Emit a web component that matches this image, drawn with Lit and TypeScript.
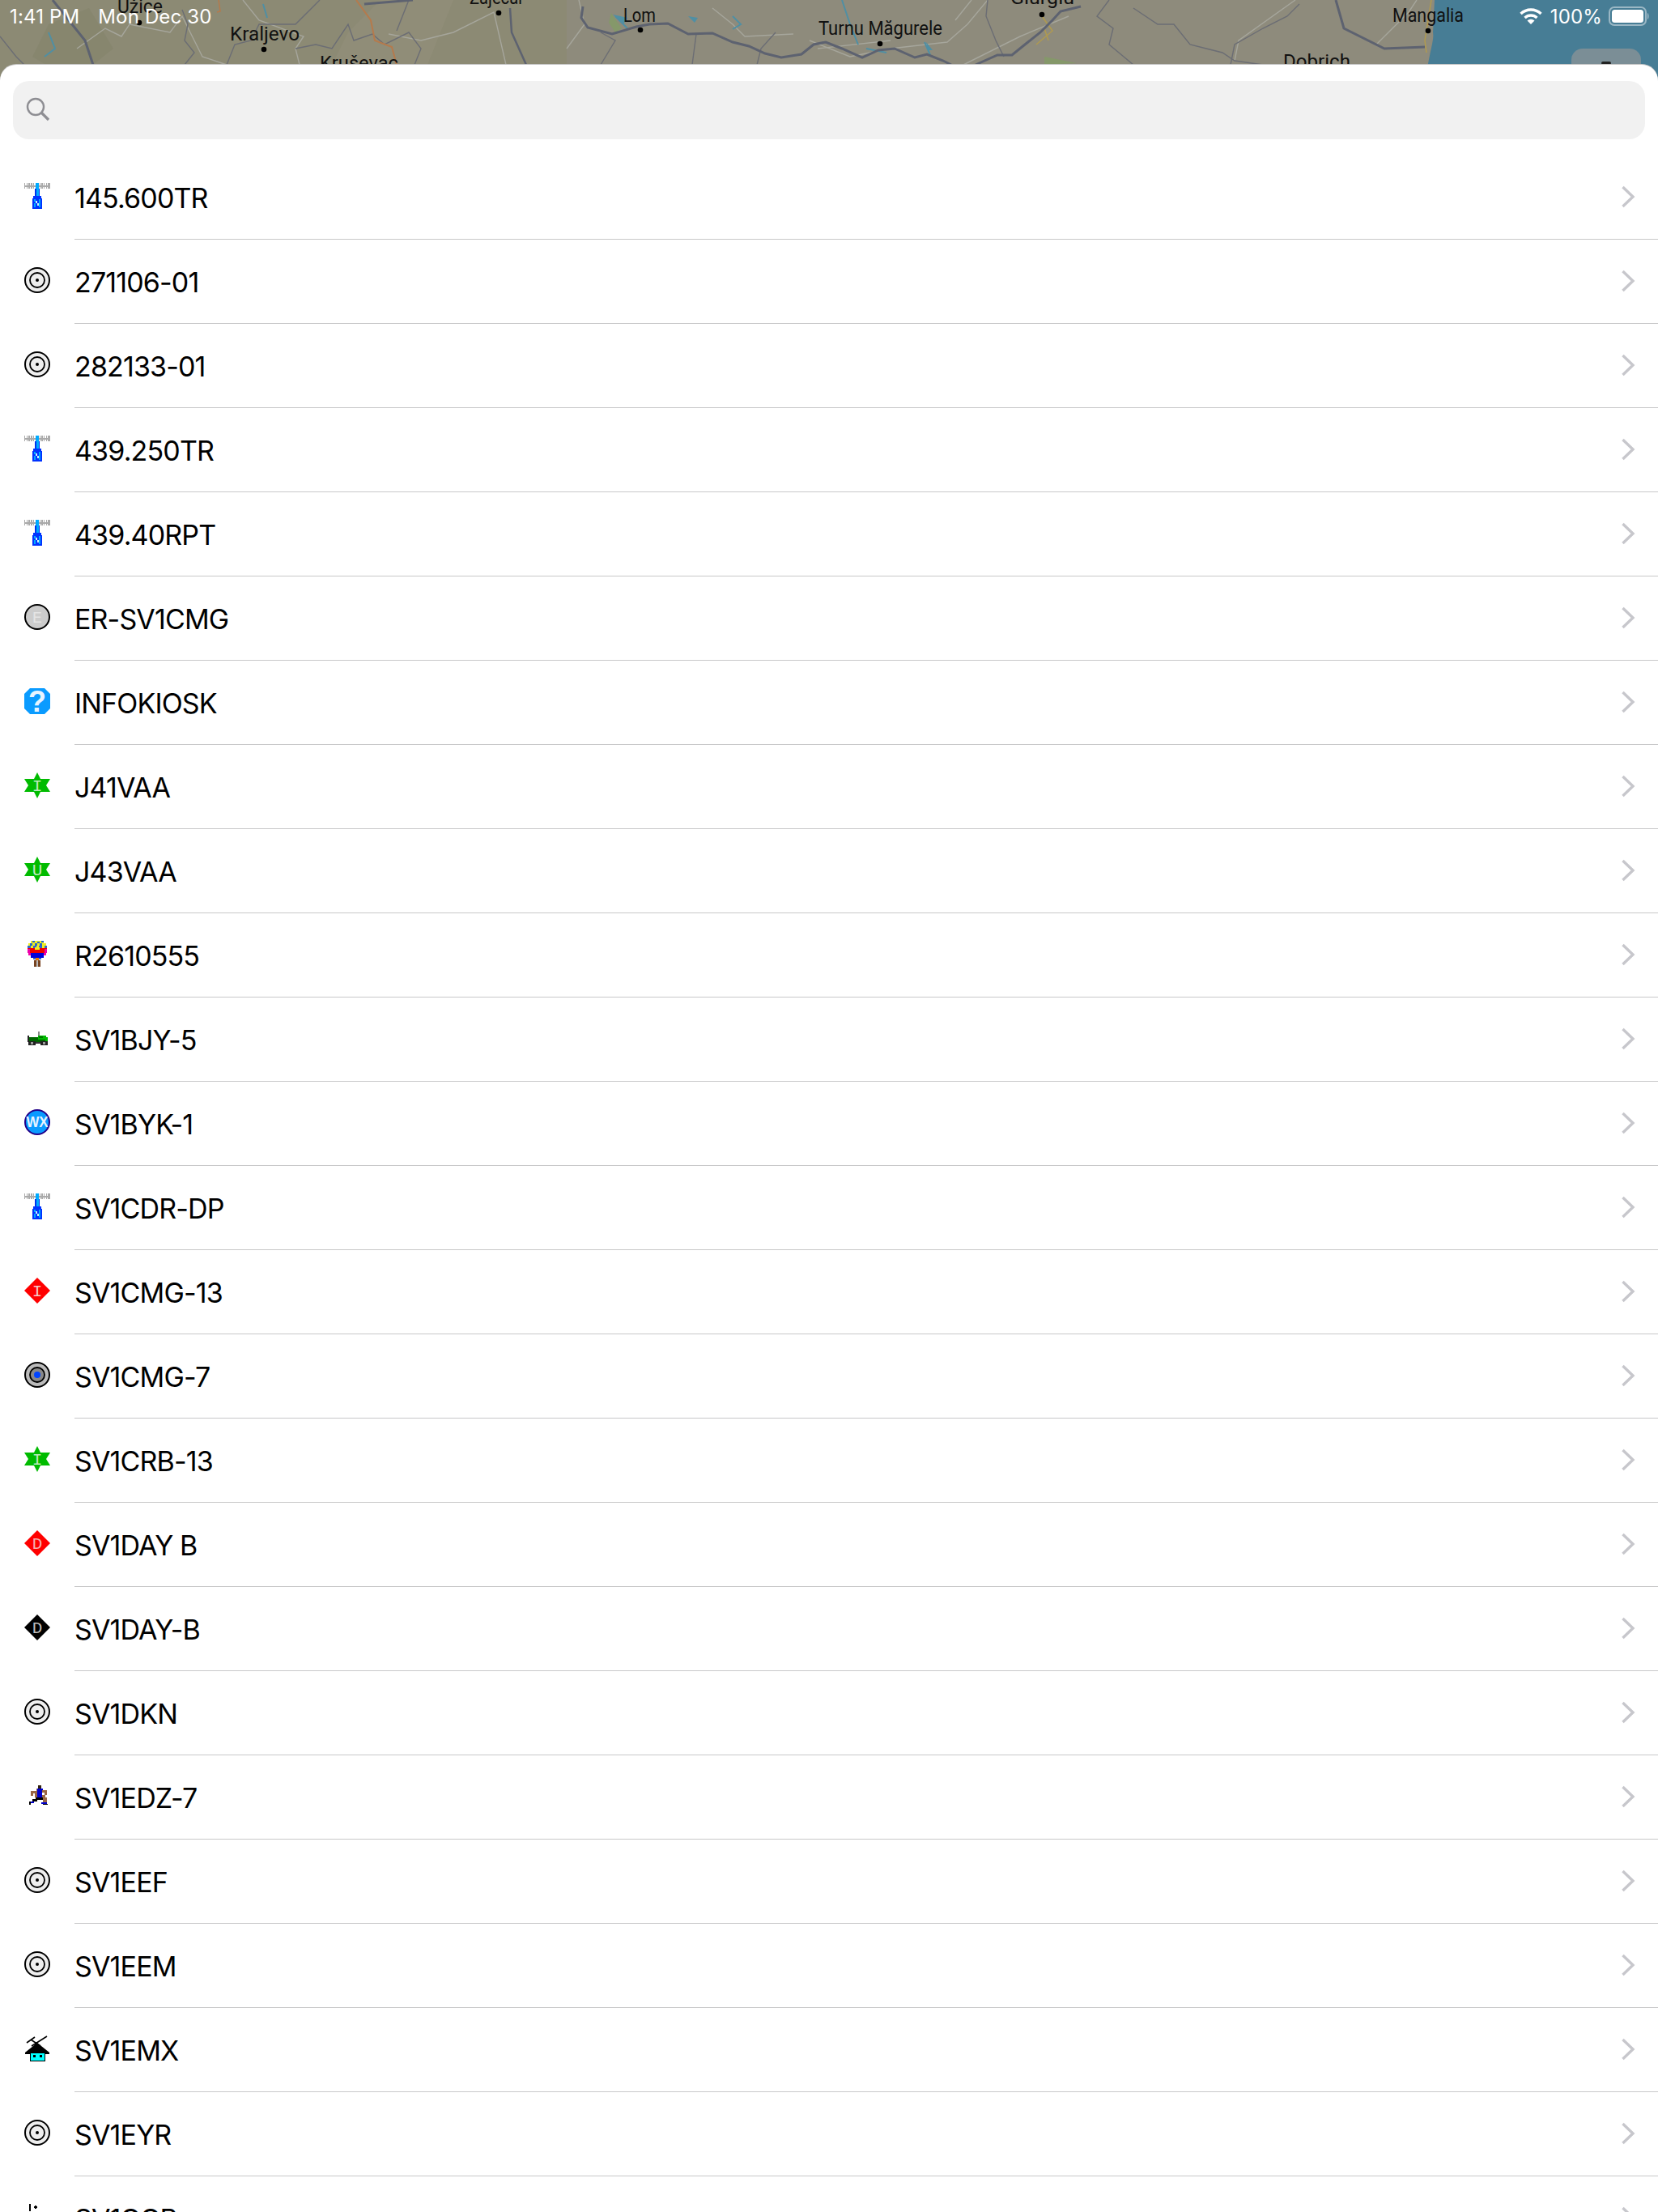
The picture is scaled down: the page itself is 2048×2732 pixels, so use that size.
import { LitElement, html, css, svg } from "lit";
import { customElement } from "lit/decorators.js";

const sym = (content: unknown) => html`<svg class="icon" viewBox="0 0 32 32" width="32" height="32">${content}</svg>`;
const ltr = (t: string, fill: string, size = 20, y = 22) =>
  svg`<text x="16" y=${y} text-anchor="middle" font-family="Liberation Mono, monospace" font-size=${size} fill=${fill}>${t}</text>`;

const px = (rows: [number, number, number, number, string][]) =>
  rows.map(([x, y, w, h, f]) => svg`<rect x=${x} y=${y} width=${w} height=${h} fill=${f} shape-rendering="crispEdges"/>`);

const teeth = [0, 2.7, 5.4, 8.1, 10.8, 13.5, 18.5, 21.2, 23.9, 26.6, 29.3, 30.6];
const tower = sym(svg`
  <g shape-rendering="crispEdges">
    <rect x="0" y="3" width="32" height="2" fill="#aaa"/>
    ${teeth.map((x) => svg`<rect x=${x} y="0" width="1.4" height="7" fill="#aaa"/>`)}
    <rect x="14" y="0" width="4" height="8" fill="#0af"/>
    <rect x="13" y="7" width="6" height="11" fill="#03e"/>
    <rect x="15" y="5" width="3" height="13" fill="#0af"/>
    <rect x="11" y="16" width="10" height="4" fill="#03f"/>
    <rect x="10" y="19" width="12" height="13" fill="#03f"/>
    <rect x="12" y="20" width="2" height="3" fill="#0af"/>
    <rect x="14" y="22" width="2" height="3" fill="#cef"/>
    <rect x="16" y="25" width="2" height="3" fill="#cef"/>
    <rect x="18" y="20" width="2" height="10" fill="#0af"/>
    <rect x="12" y="25" width="2" height="5" fill="#0af"/>
  </g>`);

const target = (fill = "#eee", inner = "none", dot = "#000", r = 2) => sym(svg`
  <circle cx="16" cy="16" r="15" fill=${fill} stroke="#000" stroke-width="2"/>
  <circle cx="16" cy="16" r="9" fill=${inner} stroke="#000" stroke-width="1.8"/>
  <circle cx="16" cy="16" r=${r} fill=${dot}/>`);

const er = sym(svg`
  <circle cx="16" cy="16" r="15" fill="#ccc" stroke="#000" stroke-width="2"/>
  ${ltr("E", "#e4e4e4", 20, 23)}`);

const info = sym(svg`
  <path d="M7 0H25L32 7V25L25 32H7L0 25V7Z" fill="#0a9bff"/>
  <text x="16" y="29" text-anchor="middle" font-family="Liberation Sans, sans-serif" font-weight="700" font-size="36" fill="#e8f4ff">?</text>`);

const star = (l: string) => sym(svg`
  <path d="M16 0L20 8H32L27 16L32 24H20L16 32L12 24H0L5 16L0 8H12Z" fill="#0b0" />
  ${ltr(l, "#bfe8bf", 21, 23)}`);

const diamond = (fill: string, l: string, c: string) => sym(svg`
  <path d="M16 0L32 16L16 32L0 16Z" fill=${fill}/>
  ${ltr(l, c, 21, 23)}`);

const balloon = sym(px([
  [8, 0, 16, 3, "#ee2"], [10, 0, 3, 2, "#26c"], [16, 1, 3, 2, "#26c"], [21, 0, 3, 2, "#26c"],
  [5, 3, 22, 3, "#ee2"], [7, 3, 3, 3, "#26c"], [13, 3, 3, 3, "#26c"], [19, 3, 3, 3, "#26c"],
  [4, 6, 24, 3, "#36c"], [8, 6, 3, 3, "#ee2"], [15, 6, 3, 3, "#ee2"], [22, 6, 3, 3, "#ee2"],
  [4, 9, 24, 6, "#e00"], [4, 10, 3, 5, "#e0a"], [25, 10, 3, 5, "#e0a"], [13, 8, 6, 3, "#ee2"],
  [5, 15, 22, 3, "#e0a"], [8, 15, 16, 3, "#00d"], [8, 18, 16, 3, "#00d"], [11, 21, 10, 2, "#36c"],
  [14, 21, 4, 3, "#e70"], [12, 24, 8, 8, "#742"], [15, 24, 2, 8, "#bbb"],
]));

const jeep = sym(px([
  [17, 8, 2, 6, "#888"], [4, 13, 2, 8, "#222"], [6, 15, 12, 3, "#060"], [6, 18, 22, 3, "#060"],
  [17, 13, 10, 5, "#0b0"], [18, 14, 5, 2, "#070"], [26, 15, 3, 5, "#0b0"], [5, 20, 9, 5, "#222"],
  [20, 20, 9, 5, "#222"], [8, 21, 3, 3, "#999"], [23, 21, 3, 3, "#999"], [14, 21, 6, 2, "#333"],
]));

const wx = sym(svg`
  <circle cx="16" cy="16" r="15" fill="#0a9bff" stroke="#208" stroke-width="2"/>
  <text x="16" y="22" text-anchor="middle" textLength="27" lengthAdjust="spacingAndGlyphs" font-family="Liberation Sans, sans-serif" font-weight="700" font-size="18" fill="#e8f4ff">WX</text>`);

const runner = sym(svg`<g transform="translate(6 3)">${px([
  [11, 0, 4, 4, "#321"], [9, 4, 5, 3, "#964"], [14, 4, 3, 3, "#00c"], [10, 4, 6, 11, "#00c"],
  [2, 7, 8, 3, "#964"], [2, 10, 3, 3, "#964"], [16, 6, 6, 3, "#964"], [19, 9, 3, 3, "#964"],
  [7, 10, 3, 5, "#964"], [8, 15, 10, 3, "#000"], [16, 12, 4, 3, "#964"], [17, 15, 5, 6, "#964"],
  [4, 17, 6, 3, "#000"], [0, 20, 6, 2, "#00c"], [0, 20, 2, 4, "#000"], [15, 21, 7, 2, "#00c"], [17, 23, 6, 1, "#000"],
])}</g>`);

const house = sym(svg`
  <g stroke="#000" stroke-width="1.6" fill="none">
    <path d="M3 9L13 2M9 13L28 1M14 14V8M8 5L20 13" />
  </g>
  <path d="M1 21L16 9L31 21V23H1Z" fill="#000"/>
  ${px([[7, 22, 19, 10, "#000"], [8, 22, 17, 9, "#0ff"], [11, 24, 3, 3, "#000"], [19, 24, 3, 3, "#000"]])}`);

const rows: [string, unknown][] = [
  ["145.600TR", tower], ["271106-01", target()], ["282133-01", target()], ["439.250TR", tower],
  ["439.40RPT", tower], ["ER-SV1CMG", er], ["INFOKIOSK", info], ["J41VAA", star("I")],
  ["J43VAA", star("U")], ["R2610555", balloon], ["SV1BJY-5", jeep], ["SV1BYK-1", wx],
  ["SV1CDR-DP", tower], ["SV1CMG-13", diamond("#f00", "I", "#f4c8c8")],
  ["SV1CMG-7", target("#bbb", "#888", "#04f", 4)], ["SV1CRB-13", star("I")],
  ["SV1DAY B", diamond("#f00", "D", "#f4b0b0")], ["SV1DAY-B", diamond("#000", "D", "#bbb")],
  ["SV1DKN", target()], ["SV1EDZ-7", runner], ["SV1EEF", target()], ["SV1EEM", target()],
  ["SV1EMX", house], ["SV1EYR", target()],
  ["SV1GGB", sym(svg`<path d="M7 0V9M12 4H16M14 2V6" stroke="#000" stroke-width="2" fill="none"/>`)],
];

const label = (t: string, x: number, y: number, w: number) =>
  svg`<text x=${x} y=${y} textLength=${w} lengthAdjust="spacingAndGlyphs" class="city">${t}</text>`;
const dot = (x: number, y: number) => svg`<circle cx=${x} cy=${y} r="3.3" fill="#000"/>`;

const mapArt = svg`
  <rect width="2048" height="100" fill="#8e8b7c"/>
  <rect width="700" height="100" fill="#8c8a74"/>
  <path d="M560 0L520 100H400L430 40L470 0Z" fill="#938f7c" opacity=".6"/>
  <path d="M60 30L110 10L140 60L90 100L40 70Z" fill="#85846c" opacity=".7"/>
  <path d="M1772 0H2048V100H1761C1765 65 1772 50 1770 40Z" fill="#477d95"/>
  <g fill="none" stroke="#a6a69c" stroke-width="1.4">
    <path d="M95 60L130 35L150 45L160 30L210 40L225 20L250 70L280 80M300 0L320 25L375 45L365 60L370 80"/>
    <path d="M480 42L520 50L560 40L610 15L625 80M1000 50L1050 70L1100 60L1170 52L1195 30L1220 0M700 60L722 30L715 0M880 10L905 30L920 45L980 42M1190 80L1260 45L1320 20"/>
    <path d="M1525 75L1530 50L1600 0M1700 55L1740 15L1750 0M1180 25L1200 0M1010 60L1100 50"/>
  </g>
  <g fill="none" stroke="#6b6d74" stroke-width="1.4">
    <path d="M0 45L20 70L30 80M225 12L232 30L228 50L240 65L228 80M280 80L290 55L310 50L320 30L365 30L395 0"/>
    <path d="M365 60L390 55L410 60L430 30L437 50L460 42L475 55L505 40L520 60L512 80"/>
    <path d="M490 38L505 0M1400 10L1430 30L1450 30L1470 55L1490 60L1510 65L1525 75L1560 80M1520 80L1525 55L1560 35L1590 20L1605 5"/>
    <path d="M958 40L940 60L935 80M742 80L760 50L742 40M860 42L855 80M1220 0L1218 20L1230 50L1240 70M1370 0L1355 20L1375 35L1370 55L1400 80"/>
  </g>
  <path d="M65 0L105 50L115 80M450 5L510 0M1650 0L1660 35L1710 60L1760 58" fill="none" stroke="#5d6270" stroke-width="3"/>
  <path d="M630 10L632 40L650 80" fill="none" stroke="#5d6270" stroke-width="2.5"/>
  <path d="M440 0L458 25L463 50L484 58L490 80" fill="none" stroke="#b57a4c" stroke-width="2"/>
  <path d="M270 0L272 14L268 15" fill="none" stroke="#b57a4c" stroke-width="1.5"/>
  <path d="M1768 0L1760 50L1762 65M1287 20L1300 38L1280 55M1290 35L1295 50" fill="none" stroke="#b09a4f" stroke-width="1.5"/>
  <path d="M60 40L68 60L55 70M325 5L330 22M905 20L915 30L905 36M1040 0L1050 30L1060 55M1142 52L1150 70M1070 60L1095 65M760 20L775 35" fill="none" stroke="#4f8fa4" stroke-width="2"/>
  <path d="M757 18L775 22L770 30Z M850 20L862 22L858 28Z M1144 52L1152 62L1146 62Z" fill="#4f8fa4"/>
  <path d="M755 16L768 35L760 40L752 28Z M1290 70L1330 78L1290 80Z" fill="#85986a"/>
  <path d="M720 8L718 22L726 34L756 42L786 33L802 30L825 29L850 42L880 41L905 52L925 57L945 66L965 71L990 67L1005 55L1020 52L1040 60L1065 71L1085 62L1105 60L1130 71L1145 67L1165 75L1175 80M1205 80L1232 68L1250 68L1266 55L1285 40L1300 25L1310 14L1335 8"
    fill="none" stroke="#5d6270" stroke-width="3"/>
  ${label("Užice", 145, 16, 56)}${dot(172, 28)}
  ${label("Kraljevo", 284, 50, 86)}${dot(326, 61)}
  ${label("Kruševac", 395, 86, 97)}
  ${label("Zaječar", 580, 5, 67)}${dot(616, 16)}
  ${label("Lom", 770, 27, 40)}${dot(791, 37)}
  ${label("Turnu Măgurele", 1011, 43, 153)}${dot(1087, 54)}
  ${label("Giurgiu", 1248, 5, 79)}${dot(1287, 18)}
  ${label("Mangalia", 1720, 27, 88)}${dot(1764, 38)}
  ${label("Dobrich", 1585, 84, 83)}
`;

@customElement("app-root")
export class AppRoot extends LitElement {
  static styles = css`
    :host {
      display: block;
      width: 2048px;
      height: 2732px;
      overflow: hidden;
      background: #fff;
      font-family: Inter, "Liberation Sans", sans-serif;
      color: #000;
    }
    .map {
      position: relative;
      height: 100px;
      overflow: hidden;
    }
    .map > svg {
      display: block;
    }
    .city {
      font-family: Roboto, "Liberation Sans", sans-serif;
      font-size: 24px;
      fill: #111;
    }
    .status {
      position: absolute;
      inset: 0 10px auto 12px;
      height: 40px;
      display: flex;
      align-items: center;
      justify-content: space-between;
      color: #fff;
      font-size: 24px;
      letter-spacing: 0.15px;
    }
    .status-left {
      display: flex;
      gap: 23px;
    }
    .status-right {
      display: flex;
      align-items: center;
      gap: 8px;
    }
    .wifi {
      margin-right: 2px;
    }
    .map-btn {
      position: absolute;
      left: 1941px;
      top: 60px;
      width: 86px;
      height: 30px;
      border-radius: 14px 14px 0 0;
      background: #7b8e96;
      display: flex;
      justify-content: center;
    }
    .map-btn i {
      width: 12px;
      height: 4px;
      margin-top: 16px;
      background: #222;
      border-radius: 2px;
    }
    .sheet {
      background: #fff;
      margin-top: -20px;
      position: relative;
      border-radius: 20px 20px 0 0;
      box-shadow: 0 -1px 0 #c4c4c4;
    }
    .sheet-top {
      padding: 20px 16px;
    }
    .search {
      height: 72px;
      background: #f1f1f1;
      border-radius: 20px;
      display: flex;
      align-items: center;
      padding-left: 16px;
    }
    .search svg {
      margin-top: -3px;
    }
    .row {
      display: flex;
      height: 104px;
      padding-left: 30px;
    }
    .icon {
      flex: none;
      display: block;
      margin-top: 34px;
    }
    .row-body {
      flex: 1;
      margin-left: 30px;
      display: flex;
      align-items: center;
      justify-content: space-between;
      border-bottom: 1px solid #c8c8c9;
      padding-right: 28px;
    }
    .name {
      font-size: 34px;
      letter-spacing: -0.85px;
      line-height: 40px;
      padding-top: 2px;
    }
    .chev {
      display: block;
      margin-top: -1px;
    }
  `;

  render() {
    return html`
      <div class="map">
        <svg width="2048" height="100" viewBox="0 0 2048 100">${mapArt}</svg>
        <div class="map-btn"><i></i></div>
        <div class="status">
          <div class="status-left"><span>1:41 PM</span><span>Mon Dec 30</span></div>
          <div class="status-right">
            <svg class="wifi" width="28" height="22" viewBox="0 0 28 22">
              <path d="M1.5 8A18 18 0 0 1 26.5 8" fill="none" stroke="#fff" stroke-width="3.4"/>
              <path d="M6.5 13A11 11 0 0 1 21.5 13" fill="none" stroke="#fff" stroke-width="3.4"/>
              <path d="M14 21L9.5 16.5A6.5 6.5 0 0 1 18.5 16.5Z" fill="#fff"/>
            </svg>
            <span>100%</span>
            <svg width="51" height="24" viewBox="0 0 51 24">
              <rect x="1" y="1" width="45" height="22" rx="6" fill="none" stroke="#fff" stroke-opacity=".45" stroke-width="2"/>
              <rect x="4" y="4" width="39" height="16" rx="3.5" fill="#fff"/>
              <path d="M48 8C50 9 50 15 48 16Z" fill="#fff" fill-opacity=".5"/>
            </svg>
          </div>
        </div>
      </div>
      <div class="sheet">
        <div class="sheet-top">
          <div class="search">
            <svg width="30" height="30" viewBox="0 0 30 30">
              <circle cx="12" cy="12" r="10" fill="none" stroke="#8e8e93" stroke-width="2.4"/>
              <path d="M19 19L28 28" stroke="#8e8e93" stroke-width="3.2"/>
            </svg>
          </div>
        </div>
        ${rows.map(
          ([name, icon]) => html`
            <div class="row">
              ${icon}
              <div class="row-body">
                <span class="name">${name}</span>
                <svg class="chev" width="18" height="28" viewBox="0 0 18 28">
                  <path d="M2.5 2L15 14L2.5 26" fill="none" stroke="#c7c7cc" stroke-width="3.4"/>
                </svg>
              </div>
            </div>
          `,
        )}
      </div>
    `;
  }
}
